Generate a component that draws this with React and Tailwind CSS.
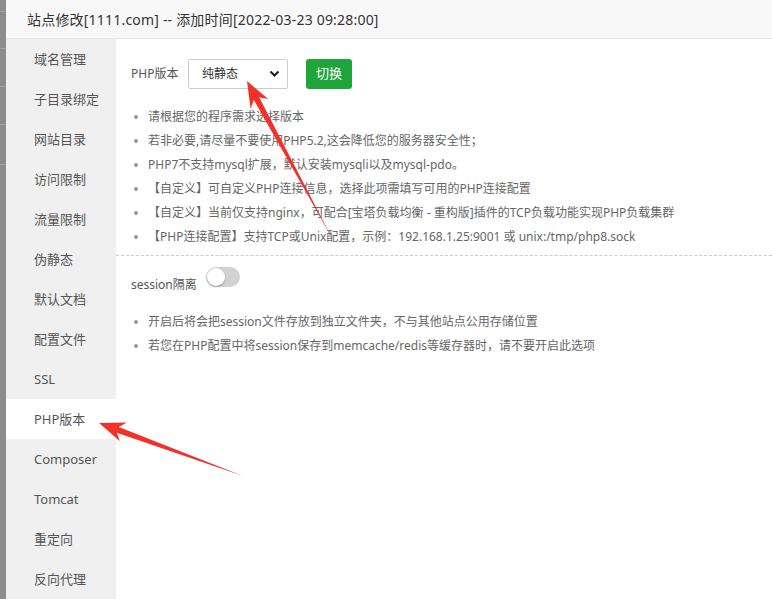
import React from "react";

const menu = [
  "域名管理",
  "子目录绑定",
  "网站目录",
  "访问限制",
  "流量限制",
  "伪静态",
  "默认文档",
  "配置文件",
  "SSL",
  "PHP版本",
  "Composer",
  "Tomcat",
  "重定向",
  "反向代理",
];

const tips = [
  "请根据您的程序需求选择版本",
  "若非必要,请尽量不要使用PHP5.2,这会降低您的服务器安全性；",
  "PHP7不支持mysql扩展，默认安装mysqli以及mysql-pdo。",
  "【自定义】可自定义PHP连接信息，选择此项需填写可用的PHP连接配置",
  "【自定义】当前仅支持nginx，可配合[宝塔负载均衡 - 重构版]插件的TCP负载功能实现PHP负载集群",
  "【PHP连接配置】支持TCP或Unix配置，示例：192.168.1.25:9001 或 unix:/tmp/php8.sock",
];

const sessionTips = [
  "开启后将会把session文件存放到独立文件夹，不与其他站点公用存储位置",
  "若您在PHP配置中将session保存到memcache/redis等缓存器时，请不要开启此选项",
];

function Tip({ text }) {
  return (
    <li className="flex items-center h-[24px] text-[12px] text-[#666]">
      <span className="w-[4px] h-[4px] rounded-full bg-[#999] ml-[3px] mr-[10px] shrink-0" />
      <span className="whitespace-nowrap">{text}</span>
    </li>
  );
}

function Arrow({ x1, y1, x2, y2 }) {
  const dx = x2 - x1;
  const dy = y2 - y1;
  const len = Math.sqrt(dx * dx + dy * dy);
  const ux = dx / len;
  const uy = dy / len;
  const px = -uy;
  const py = ux;
  const hl = 26;
  const hw = 10;
  const bx = x2 - ux * hl;
  const by = y2 - uy * hl;
  const nx = x2 - ux * (hl - 6);
  const ny = y2 - uy * (hl - 6);
  const pts = [
    [x1, y1],
    [nx + px * 3, ny + py * 3],
    [bx + px * hw, by + py * hw],
    [x2, y2],
    [bx - px * hw, by - py * hw],
    [nx - px * 3, ny - py * 3],
  ]
    .map((p) => p.join(","))
    .join(" ");
  return <polygon points={pts} fill="#f2312b" />;
}

export default function App() {
  return (
    <div
      className="relative w-[772px] h-[599px] overflow-hidden bg-white flex"
      style={{ fontFamily: '"Noto Sans", "Noto Sans CJK SC", sans-serif' }}
    >
      <div className="w-[6px] shrink-0 bg-[#8c8c8c] flex flex-col">
        <div className="h-[12px] border-b border-[#a0a0a0]" />
        <div className="h-[37px] border-b border-[#a0a0a0]" />
        <div className="h-[38px] border-b border-[#a0a0a0]" />
        <div className="h-[38px] border-b border-[#a0a0a0]" />
        <div className="h-[40px] border-b border-[#a0a0a0]" />
      </div>
      <div className="flex-1 flex flex-col">
        <div className="h-[39px] shrink-0 bg-[#f8f8f8] border-b border-[#e6e6e6] flex items-center pl-[21px] text-[14px] text-[#333] tracking-[0.2px]">
          站点修改[1111.com] -- 添加时间[2022-03-23 09:28:00]
        </div>
        <div className="flex flex-1">
          <ul className="w-[110px] shrink-0 bg-[#f0f0f0]">
            {menu.map((m) => (
              <li
                key={m}
                className={
                  "h-[40px] flex items-center pl-[28px] pt-[2px] text-[13px] text-[#555] " +
                  (m === "PHP版本" ? "bg-white" : "")
                }
              >
                {m}
              </li>
            ))}
          </ul>
          <div className="flex-1 pt-[20px]">
            <div className="flex items-center pl-[15px] h-[30px]">
              <span className="text-[12px] text-[#555] w-[57px]">PHP版本</span>
              <div className="w-[100px] h-[30px] border border-[#ccc] rounded-[2px] flex items-center justify-between pl-[13px] pr-[7px] text-[12px] text-[#333]">
                <span>纯静态</span>
                <svg width="11" height="8" viewBox="0 0 11 8">
                  <path d="M1.5 1.5 L5.5 5.5 L9.5 1.5" stroke="#222" strokeWidth="2.2" fill="none" />
                </svg>
              </div>
              <button className="ml-[18px] w-[46px] h-[30px] bg-[#20a53a] rounded-[3px] text-white text-[13px]">
                切换
              </button>
            </div>
            <ul className="mt-[16px] pl-[15px]">
              {tips.map((t) => (
                <Tip key={t} text={t} />
              ))}
            </ul>
            <div className="mt-[6px] border-t border-dashed border-[#ccc]" />
            <div className="flex items-center pl-[15px] mt-[10px] h-[30px]">
              <span className="text-[12px] text-[#555] mt-[8px]">session隔离</span>
              <span className="ml-[9px] mb-[8px] w-[34px] h-[20px] rounded-full bg-[#d2d2d2] relative">
                <span className="absolute left-[1px] top-[1px] w-[18px] h-[18px] rounded-full bg-white shadow-[0_1px_2px_rgba(0,0,0,0.3)]" />
              </span>
            </div>
            <ul className="mt-[14px] pl-[15px]">
              {sessionTips.map((t) => (
                <Tip key={t} text={t} />
              ))}
            </ul>
          </div>
        </div>
      </div>
      <svg className="absolute inset-0 pointer-events-none" width="772" height="599">
        <Arrow x1={332} y1={238} x2={247} y2={81} />
        <Arrow x1={243} y1={476} x2={99} y2={423} />
      </svg>
    </div>
  );
}
